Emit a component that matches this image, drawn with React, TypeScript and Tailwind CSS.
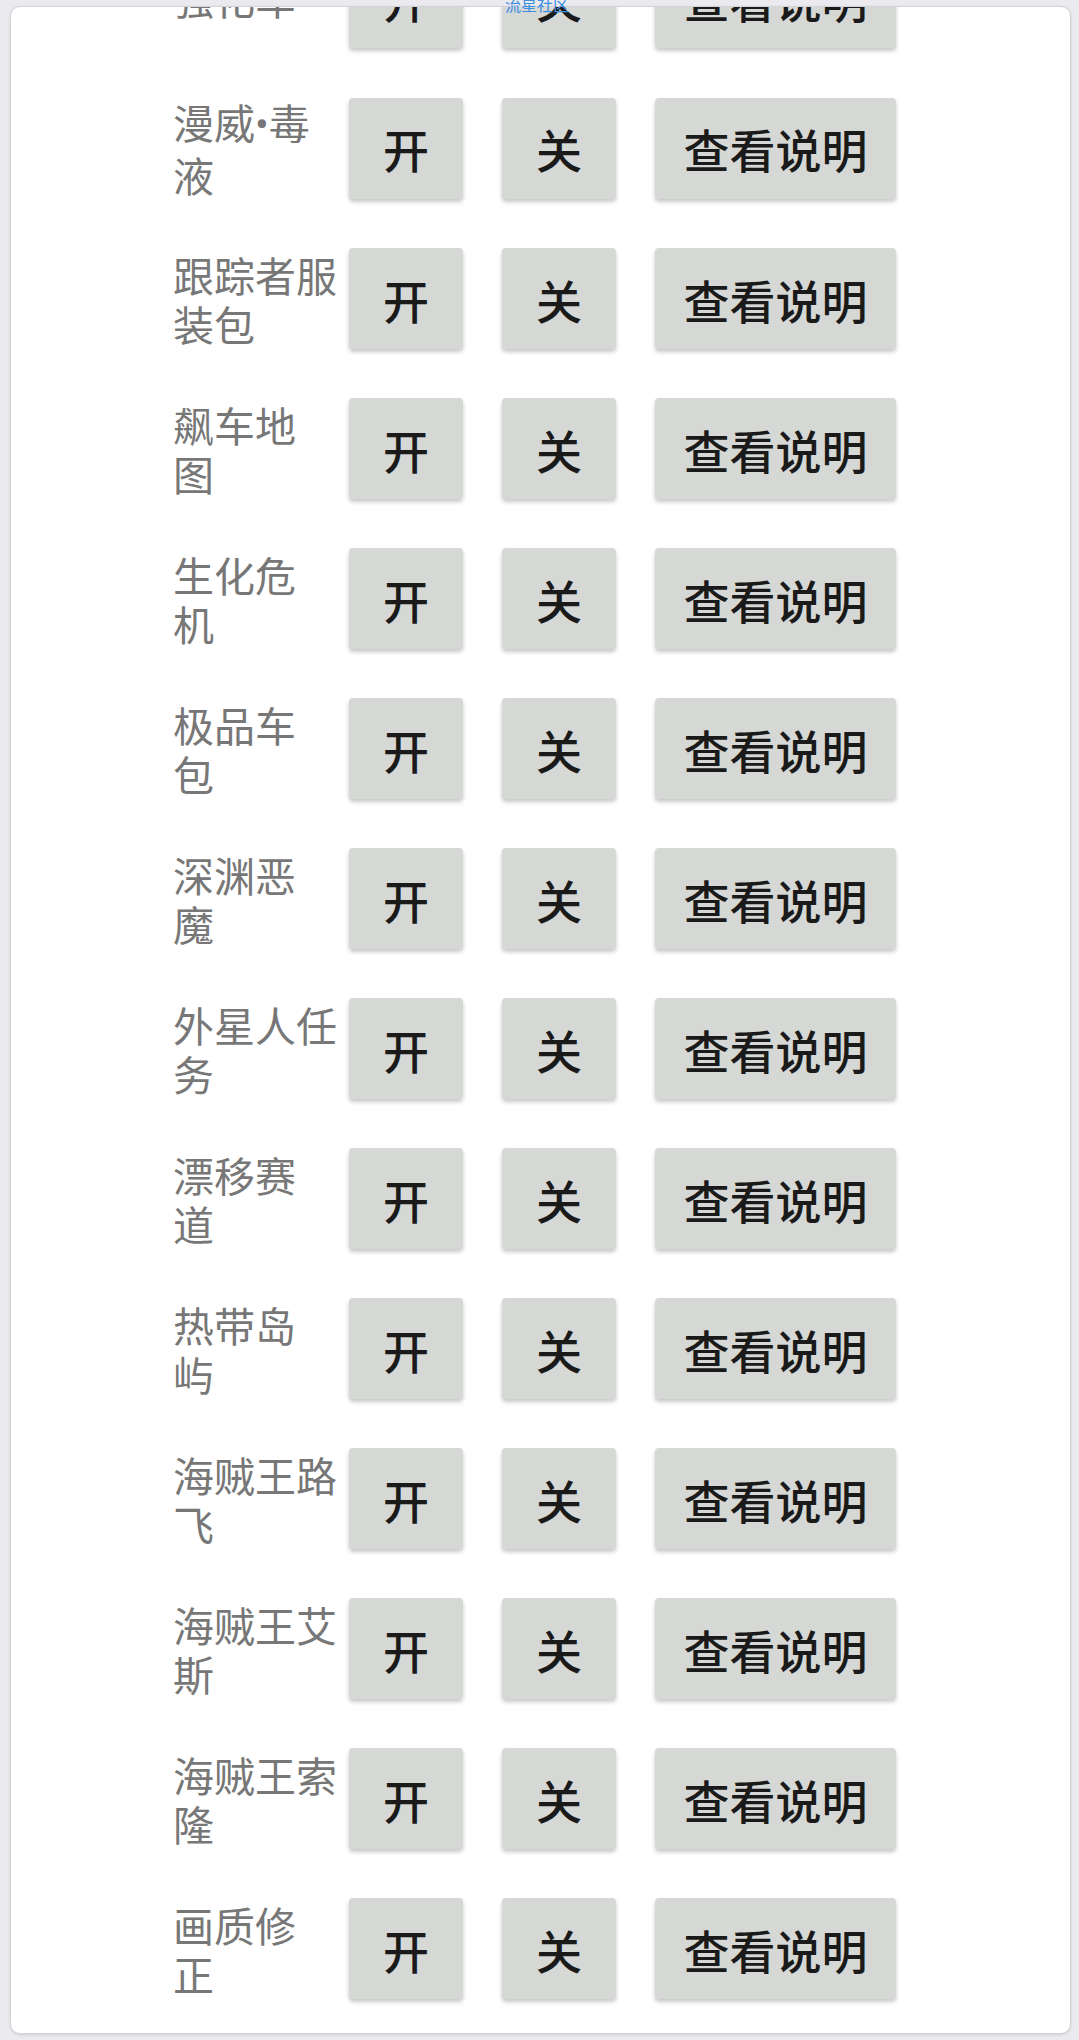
// each label is split where the original screen wraps it
const items: string[][] = [
  ["强化车"],
  ["漫威•毒", "液"],
  ["跟踪者服", "装包"],
  ["飙车地", "图"],
  ["生化危", "机"],
  ["极品车", "包"],
  ["深渊恶", "魔"],
  ["外星人任", "务"],
  ["漂移赛", "道"],
  ["热带岛", "屿"],
  ["海贼王路", "飞"],
  ["海贼王艾", "斯"],
  ["海贼王索", "隆"],
  ["画质修", "正"],
];

const btn =
  "flex items-center justify-center h-[101px] bg-[#d5d8d5] rounded-[4px] shadow-[0_3px_4px_rgba(0,0,0,0.22)] text-[46px] font-medium leading-none text-[#1a1a1a]";

function Label({ lines }: { lines: string[] }) {
  return (
    <div className="w-[166px] whitespace-nowrap text-[41px] leading-[49px] text-[#777777]">
      {lines.map((line, i) => (
        <div key={i}>
          {line.split("•").map((part, j) => (
            <span key={j}>
              {j > 0 && (
                <span style={{ fontFamily: "Roboto, sans-serif" }}>•</span>
              )}
              {part}
            </span>
          ))}
        </div>
      ))}
    </div>
  );
}

export default function App() {
  return (
    <div
      className="relative h-[2040px] w-[1079px] overflow-hidden bg-[#ebebef] pt-[6px] pl-[10px] pr-[8px]"
      style={{ fontFamily: '"Noto Sans CJK SC", "Noto Sans", sans-serif' }}
    >
      <div className="h-[2028px] overflow-hidden rounded-[10px] border border-[#d4d4d8] bg-white shadow-[0_1px_3px_rgba(0,0,0,0.12)]">
        <div className="mt-[-60px] flex flex-col gap-[49px] pl-[162px]">
          {items.map((lines) => (
            <div key={lines.join("")} className="flex items-center">
              <Label lines={lines} />
              <button className={`${btn} ml-[10px] w-[114px]`}>开</button>
              <button className={`${btn} ml-[39px] w-[114px]`}>关</button>
              <button className={`${btn} ml-[39px] w-[241px]`}>查看说明</button>
            </div>
          ))}
        </div>
      </div>
      <div className="absolute left-[505px] top-[-4px] text-[16px] leading-none text-[#3d8de0]">
        流星社区
      </div>
    </div>
  );
}
